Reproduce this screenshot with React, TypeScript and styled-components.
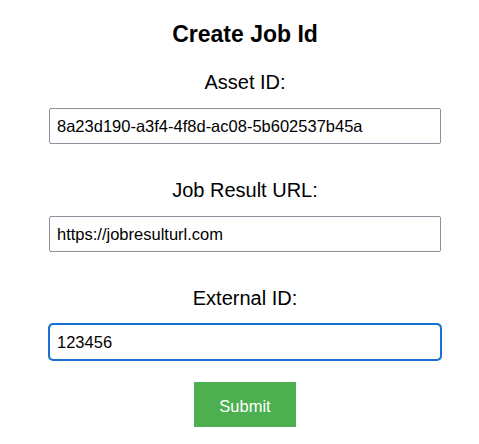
import { useState } from 'react';
import styled, { createGlobalStyle } from 'styled-components';

const GlobalStyle = createGlobalStyle`
  html, body {
    margin: 0;
    padding: 0;
    background: #ffffff;
  }

  body {
    font-family: "Liberation Sans", Arial, sans-serif;
    color: #000000;
  }
`;

const Page = styled.div`
  display: flex;
  justify-content: center;
  padding: 20px 0 0 11px;
`;

const Form = styled.form`
  width: 392px;
  display: flex;
  flex-direction: column;
  align-items: center;
`;

const Title = styled.h2`
  margin: 0 0 22px;
  font-size: 23px;
  line-height: 28px;
  font-weight: bold;
  text-align: center;
`;

const Field = styled.div`
  width: 100%;
  display: flex;
  flex-direction: column;
  align-items: center;
  gap: 14px;

  & + & {
    margin-top: 34px;
  }
`;

const Label = styled.label`
  font-size: 20px;
  line-height: 24px;
  text-align: center;
`;

const Input = styled.input<{ $focused?: boolean }>`
  box-sizing: border-box;
  width: 100%;
  height: 36px;
  padding: 1px 7px 0;
  border: 1px solid #8f8f9d;
  font-family: "Liberation Sans", Arial, sans-serif;
  font-size: 16.5px;
  color: #000000;
  background: #ffffff;
  outline: ${props => (props.$focused ? '2px solid #1572d3' : 'none')};
  outline-offset: -1px;
  border-radius: ${props => (props.$focused ? '4px' : '2px')};
`;

const SubmitButton = styled.button`
  margin-top: 22px;
  width: 102px;
  height: 45px;
  padding: 3px 0 0;
  border: none;
  background: #4caf50;
  color: #ffffff;
  font-family: "Liberation Sans", Arial, sans-serif;
  font-size: 16.5px;
  cursor: pointer;
  display: flex;
  align-items: center;
  justify-content: center;
`;

export default function App() {
  const [assetId, setAssetId] = useState('8a23d190-a3f4-4f8d-ac08-5b602537b45a');
  const [resultUrl, setResultUrl] = useState('https://jobresulturl.com');
  const [externalId, setExternalId] = useState('123456');

  return (
    <>
      <GlobalStyle />
      <Page>
        <Form onSubmit={e => e.preventDefault()}>
          <Title>Create Job Id</Title>
          <Field>
            <Label htmlFor="asset-id">Asset ID:</Label>
            <Input id="asset-id" value={assetId} onChange={e => setAssetId(e.target.value)} />
          </Field>
          <Field>
            <Label htmlFor="result-url">Job Result URL:</Label>
            <Input id="result-url" value={resultUrl} onChange={e => setResultUrl(e.target.value)} />
          </Field>
          <Field>
            <Label htmlFor="external-id">External ID:</Label>
            <Input
              id="external-id"
              $focused
              value={externalId}
              onChange={e => setExternalId(e.target.value)}
            />
          </Field>
          <SubmitButton type="submit">Submit</SubmitButton>
        </Form>
      </Page>
    </>
  );
}
